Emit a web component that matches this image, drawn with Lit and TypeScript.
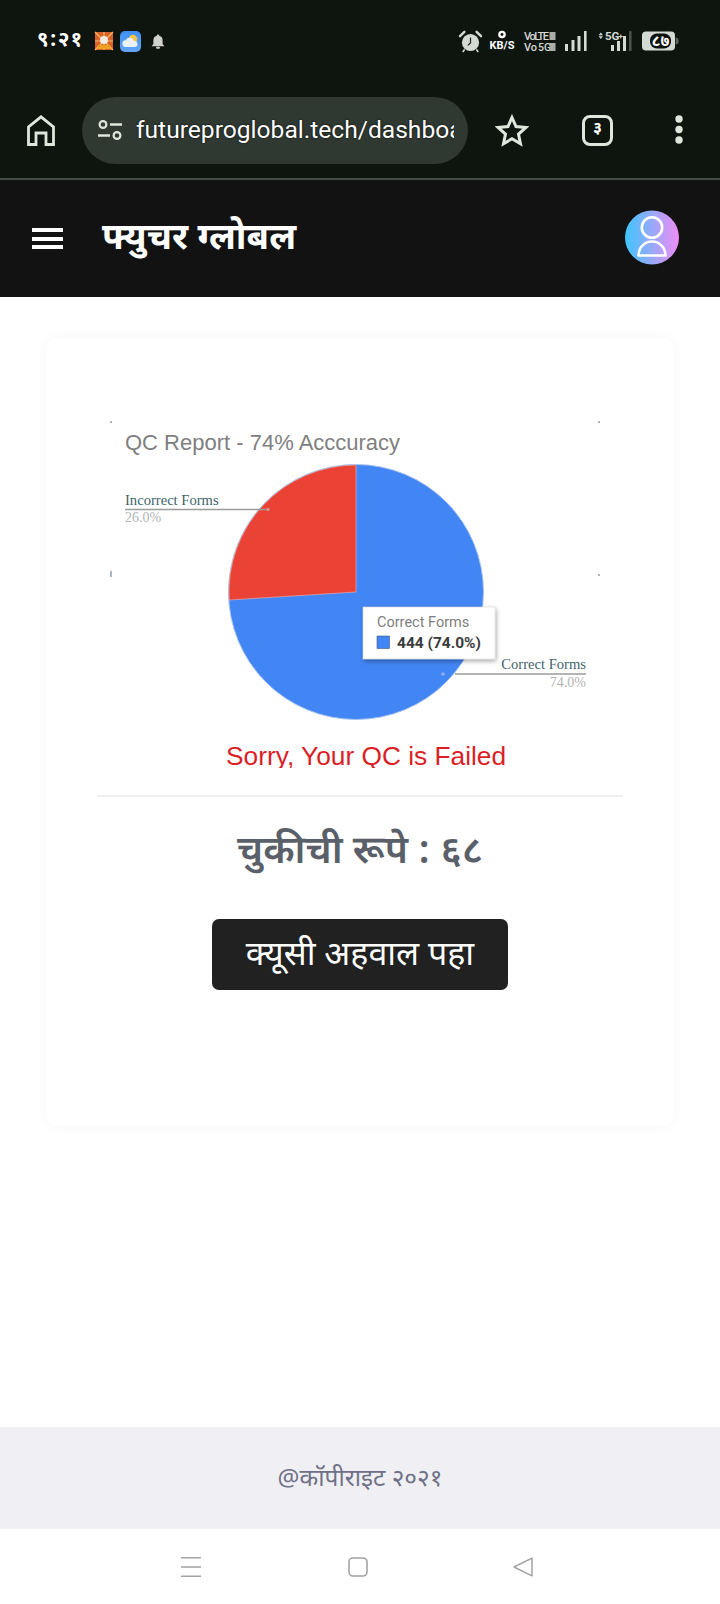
import { LitElement, css, html, svg } from 'lit';
import { customElement } from 'lit/decorators.js';

const DEVA = css`"Noto Sans Devanagari", "Noto Sans", "Lohit Devanagari", "Liberation Sans", sans-serif`;

@customElement('status-bar')
export class StatusBar extends LitElement {
  static styles = css`
    :host {
      display: flex;
      align-items: center;
      height: 82px;
      padding: 0 41px 0 37px;
      color: #fff;
    }
    .time {
      font: 700 21px/1 ${DEVA};
      letter-spacing: 1px;
      width: 51px;
      text-shadow: 0 0 2px #000;
    }
    .left {
      display: flex;
      align-items: center;
      gap: 7px;
    }
    .right {
      margin-left: auto;
      display: flex;
      align-items: center;
    }
    svg { display: block; overflow: visible; }
    svg text { font-family: "Roboto", sans-serif; }
    svg .batt {
      font: 700 16px ${DEVA};
      fill: #fff;
      stroke: #0e120e;
      stroke-width: 3px;
      paint-order: stroke;
    }
  `;

  render() {
    return html`
      <div class="left">
        <span class="time">९:२१</span>
        <svg width="18" height="18" viewBox="0 0 18 18">
          <rect width="18" height="18" fill="#d8622a" />
          <path d="M0 0L18 18M18 0L0 18M9 0V18M0 9H18" stroke="#f4b860" stroke-width="1.2" />
          <circle cx="9" cy="8" r="4" fill="#f1ece4" />
          <rect x="3" y="13" width="12" height="4" fill="#eda21f" />
        </svg>
        <svg width="21" height="21" viewBox="0 0 21 21">
          <defs>
            <linearGradient id="sky" x1="0" y1="0" x2="0" y2="1">
              <stop offset="0" stop-color="#3f8ff0" />
              <stop offset="1" stop-color="#62a6f5" />
            </linearGradient>
          </defs>
          <rect width="21" height="21" rx="5" fill="url(#sky)" />
          <circle cx="13" cy="8" r="4.2" fill="#f6c64a" />
          <path d="M6 16a3.4 3.4 0 0 1-.4-6.8A4.6 4.6 0 0 1 14 10a3 3 0 0 1 1 6z" fill="#e9f1fa" />
        </svg>
        <svg width="14" height="15" viewBox="0 0 14 15" style="margin-left:3px">
          <path d="M7 0.5a1.3 1.3 0 0 1 1.3 1.3A4.6 4.6 0 0 1 11.6 6.3V10L13.4 12.2H0.6L2.4 10V6.3A4.6 4.6 0 0 1 5.7 1.8 1.3 1.3 0 0 1 7 0.5z" fill="#cfd2cd" />
          <rect x="5" y="12.8" width="4" height="2" rx="1" fill="#cfd2cd" />
        </svg>
      </div>
      <div class="right">
        <svg width="23" height="23" viewBox="0 0 23 23">
          <circle cx="11.5" cy="12.5" r="8.6" fill="#d5d9d3" />
          <path d="M11.5 7.5V13L8.8 15.4" stroke="#1a1f1a" stroke-width="1.2" fill="none" />
          <path d="M1 6.2L5.4 1.8M22 6.2L17.6 1.8" stroke="#d5d9d3" stroke-width="2.4" stroke-linecap="round" />
          <path d="M5.6 19.4L3.8 22M17.4 19.4L19.2 22" stroke="#d5d9d3" stroke-width="1.6" />
        </svg>
        <svg width="26" height="22" viewBox="0 0 26 22" style="margin-left:7px">
          <circle cx="13" cy="4.5" r="3.8" fill="#fff" />
          <circle cx="13" cy="4.5" r="1.4" fill="#0e150f" />
          <text x="13" y="18.5" text-anchor="middle" font-size="11" font-weight="700" fill="#fff">KB/S</text>
        </svg>
        <svg width="33" height="24" viewBox="0 0 33 24" style="margin-left:9px">
          <text x="0" y="11" font-size="11" font-weight="500" fill="#d5d9d3" textLength="25">VoLTE</text>
          <rect x="25.5" y="3" width="6" height="8" fill="#a9aca7" />
          <text x="0" y="22" font-size="11" font-weight="500" fill="#d5d9d3">Vo</text>
          <text x="14" y="22" font-size="10.5" font-weight="500" fill="#d5d9d3">5G</text>
          <rect x="25.5" y="14" width="6" height="8" fill="#a9aca7" />
        </svg>
        <svg width="22" height="21" viewBox="0 0 22 21" style="margin-left:8px">
          <rect x="0" y="13" width="3" height="7" fill="#d5d9d3" />
          <rect x="6.5" y="9" width="3" height="11" fill="#d5d9d3" />
          <rect x="12.5" y="5" width="3" height="15" fill="#d5d9d3" />
          <rect x="19" y="0" width="2.6" height="20" fill="#d5d9d3" />
        </svg>
        <svg width="35" height="21" viewBox="0 0 35 21" style="margin-left:11px">
          <path d="M2.8 1.5L5 4.2H0.6zM2.8 8L5 5.3H0.6z" fill="#d5d9d3" />
          <text x="7" y="9" font-size="11.5" font-weight="700" fill="#d5d9d3">5G</text>
          <text x="20.5" y="8" font-size="8" font-weight="700" fill="#d5d9d3">+</text>
          <rect x="13" y="14" width="3" height="6" fill="#d5d9d3" />
          <rect x="19" y="10" width="3" height="10" fill="#d5d9d3" />
          <rect x="25" y="5" width="3" height="15" fill="#d5d9d3" />
          <rect x="31" y="0" width="2.6" height="20" fill="#4a4f4a" />
        </svg>
        <svg width="37" height="20" viewBox="0 0 37 20" style="margin-left:9px">
          <rect x="0" y="0.5" width="33" height="19" rx="4" fill="#d5d9d3" />
          <path d="M33.6 6.5a3 3 0 0 1 3 3v1a3 3 0 0 1-3 3z" fill="#5d615d" />
          <rect x="8" y="2.5" width="21" height="15" rx="7" fill="#0e120e" />
          <text class="batt" x="18.5" y="15" text-anchor="middle">८७</text>
        </svg>
      </div>
    `;
  }
}

@customElement('url-bar')
export class UrlBar extends LitElement {
  static styles = css`
    :host {
      display: flex;
      align-items: center;
      height: 98px;
      box-sizing: border-box;
      padding: 0 0 0 27px;
      border-bottom: 2px solid #454e45;
    }
    svg { display: block; flex: none; }
    .pill {
      width: 386px;
      height: 67px;
      margin-left: 27px;
      box-sizing: border-box;
      padding: 0 14px 0 15px;
      display: flex;
      align-items: center;
      gap: 13px;
      background: #2f3831;
      border-radius: 34px;
    }
    .url {
      flex: 1;
      min-width: 0;
      overflow: hidden;
      white-space: nowrap;
      font: 400 24.6px/32px "Roboto", sans-serif;
      color: #fff;
      text-shadow: 0 0 2px #000;
    }
    .star { margin-left: 27px; }
    .tabs {
      width: 31px;
      height: 31px;
      box-sizing: border-box;
      margin-left: 53px;
      border: 3px solid #dfe6dc;
      border-radius: 8px;
      display: flex;
      align-items: center;
      justify-content: center;
      color: #fff;
      font: 700 16px/1 ${DEVA};
    }
    .more { margin-left: 62px; }
  `;

  render() {
    return html`
      <svg class="home" width="28" height="31" viewBox="0 0 28 31">
        <path d="M1.5 29.5V12L14 1.8L26.5 12V29.5H19V18H9V29.5Z" fill="none" stroke="#dfe6dc" stroke-width="2.8" />
      </svg>
      <div class="pill">
        <svg width="26" height="22" viewBox="0 0 26 22">
          <circle cx="6" cy="5.5" r="3.4" fill="none" stroke="#dfe6dc" stroke-width="2.2" />
          <path d="M13 5.5H25M1 16.5H13" stroke="#dfe6dc" stroke-width="2.4" />
          <circle cx="20" cy="16.5" r="3.4" fill="none" stroke="#dfe6dc" stroke-width="2.2" />
        </svg>
        <span class="url">futureproglobal.tech/dashboard</span>
      </div>
      <svg class="star" width="34" height="33" viewBox="0 0 34 33">
        <path d="M17 3.5L21 12.5L30.8 13.5L23.5 20.1L25.5 29.7L17 24.8L8.5 29.7L10.5 20.1L3.2 13.5L13 12.5Z" fill="none" stroke="#dfe6dc" stroke-width="3" />
      </svg>
      <div class="tabs">३</div>
      <svg class="more" width="8" height="30" viewBox="0 0 8 30">
        <circle cx="4" cy="4" r="3.7" fill="#dfe6dc" />
        <circle cx="4" cy="14.5" r="3.7" fill="#dfe6dc" />
        <circle cx="4" cy="25" r="3.7" fill="#dfe6dc" />
      </svg>
    `;
  }
}

@customElement('app-header')
export class AppHeader extends LitElement {
  static styles = css`
    :host {
      display: flex;
      align-items: center;
      height: 117px;
      padding: 0 41px 0 32px;
      background: #121212;
      color: #fff;
    }
    .menu {
      width: 31px;
      height: 21px;
      display: flex;
      flex-direction: column;
      justify-content: space-between;
    }
    .menu span {
      height: 4px;
      background: #fff;
    }
    .title {
      margin: 3px 0 0 39px;
      font: 700 36.5px/1 ${DEVA};
    }
    .avatar {
      margin: 0 0 3px auto;
      display: block;
    }
  `;

  render() {
    return html`
      <div class="menu"><span></span><span></span><span></span></div>
      <div class="title">फ्युचर ग्लोबल</div>
      <svg class="avatar" width="54" height="55" viewBox="0 0 54 55">
        <defs>
          <linearGradient id="av" x1="0" y1="0" x2="1" y2="0">
            <stop offset="0" stop-color="#3fc6fd" />
            <stop offset="1" stop-color="#f08cf5" />
          </linearGradient>
        </defs>
        <circle cx="27" cy="27.5" r="27" fill="url(#av)" />
        <circle cx="27" cy="17.5" r="10.2" fill="none" stroke="#fff" stroke-width="2.6" />
        <path d="M13.5 45.5C13.5 37 20 31.5 27 31.5C34 31.5 40.5 37 40.5 45.5Z" fill="none" stroke="#fff" stroke-width="2.6" stroke-linejoin="round" />
      </svg>
    `;
  }
}

// pie slices, 74 / 26 split, measured from the image in the reference
const pieSlices = () => svg`
  <circle cx="246" cy="174" r="127.5" fill="#4285f4" stroke="#a9c4ee" stroke-width="1" />
  <path d="M246 174V47A127 127 0 0 0 119.2 182Z" fill="#ea4335" stroke="#f2b5ae" stroke-width="0.6" />
`;

@customElement('qc-chart')
export class QcChart extends LitElement {
  static styles = css`
    :host { display: block; }
    svg { display: block; margin: 0 auto; }
    .title { font: 400 22px "Liberation Sans", Arial, sans-serif; fill: #808080; }
    .name { font: 400 14.6px "Liberation Serif", serif; fill: #3f6468; }
    .pct { font: 400 14px "Liberation Serif", serif; fill: #b3b3b3; }
    .tip-name { font: 400 14.5px "Roboto", sans-serif; fill: #808080; }
    .tip-val { font: 700 15.5px "Roboto", sans-serif; fill: #3c3c3c; }
    .fail { font: 400 26.3px "Liberation Sans", Arial, sans-serif; fill: #dc1f26; }
  `;

  render() {
    return html`
      <svg width="500" height="350" viewBox="0 0 500 350">
        <defs>
          <filter id="tipShadow" x="-10%" y="-10%" width="125%" height="125%">
            <feDropShadow dx="1" dy="2" stdDeviation="2" flood-color="#000" flood-opacity="0.35" />
          </filter>
        </defs>
        <path d="M1 3V5M489 3V5M1 153V159M489 156V158" stroke="#5c6f80" stroke-width="1" />
        <text class="title" x="15" y="32">QC Report - 74% Acccuracy</text>
        ${pieSlices()}
        <text class="name" x="15" y="87">Incorrect Forms</text>
        <path d="M15 91.5H156" stroke="#9b9b9b" stroke-width="1.4" />
        <circle cx="158" cy="91.5" r="1.8" fill="#d8918a" />
        <text class="pct" x="15" y="104">26.0%</text>
        <circle cx="333" cy="256" r="1.8" fill="#8fb2ee" />
        <path d="M345 256H476" stroke="#9b9b9b" stroke-width="1.4" />
        <text class="name" x="476" y="251" text-anchor="end">Correct Forms</text>
        <text class="pct" x="476" y="269" text-anchor="end">74.0%</text>
        <rect x="253" y="189" width="132" height="52" fill="#fff" stroke="#d8d8d8" stroke-width="0.6" filter="url(#tipShadow)" />
        <text class="tip-name" x="267" y="209">Correct Forms</text>
        <rect x="267" y="218" width="12.5" height="12.5" fill="#4285f4" stroke="#44597c" stroke-width="0.6" />
        <text class="tip-val" x="287" y="230">444 (74.0%)</text>
        <text class="fail" x="116" y="347">Sorry, Your QC is Failed</text>
      </svg>
    `;
  }
}

@customElement('nav-bar')
export class NavBar extends LitElement {
  static styles = css`
    :host {
      display: flex;
      align-items: center;
      height: 75px;
      padding: 0 0 0 181px;
      background: #fff;
    }
    svg { display: block; }
  `;

  render() {
    return html`
      <svg width="20" height="20" viewBox="0 0 20 20">
        <path d="M0 .7H20M0 10H20M0 19.3H20" stroke="#a3a3a3" stroke-width="1.4" />
      </svg>
      <svg width="20" height="20" viewBox="0 0 20 20" style="margin-left:147px">
        <rect x="1" y="1" width="18" height="18" rx="4" fill="none" stroke="#a3a3a3" stroke-width="1.6" />
      </svg>
      <svg width="20" height="20" viewBox="0 0 20 20" style="margin-left:145px">
        <path d="M19 1.2V18.8L1 10Z" fill="none" stroke="#a3a3a3" stroke-width="1.5" stroke-linejoin="round" />
      </svg>
    `;
  }
}

@customElement('app-root')
export class AppRoot extends LitElement {
  static styles = css`
    :host {
      display: flex;
      flex-direction: column;
      width: 720px;
      height: 1604px;
      background: #fff;
      font-family: ${DEVA};
    }
    .top { background: #0e150f; }
    main {
      flex: 1;
      padding: 41px 46px 0;
    }
    .card {
      height: 788px;
      box-sizing: border-box;
      padding: 80px 51px 0;
      border-radius: 10px;
      box-shadow: 0 0 14px rgba(0, 0, 0, 0.04);
      background: #fff;
    }
    hr {
      margin: 27px 0 0;
      border: 0;
      height: 2px;
      background: #eeeff1;
    }
    .fine {
      margin: 31px 0 0;
      text-align: center;
      font-size: 39px;
      line-height: 52px;
      font-weight: 600;
      color: #5a6069;
    }
    .action {
      display: flex;
      justify-content: center;
      margin-top: 39px;
    }
    button {
      width: 296px;
      height: 71px;
      border: 0;
      padding: 5px 0 0;
      border-radius: 7px;
      background: #212121;
      color: #fff;
      font: 400 34px/1 ${DEVA};
    }
    footer {
      height: 102px;
      box-sizing: border-box;
      padding-top: 4px;
      display: flex;
      align-items: center;
      justify-content: center;
      background: #f0f0f4;
      color: #6f7087;
      font-size: 24.4px;
    }
  `;

  render() {
    return html`
      <div class="top">
        <status-bar></status-bar>
        <url-bar></url-bar>
      </div>
      <app-header></app-header>
      <main>
        <div class="card">
          <qc-chart></qc-chart>
          <hr />
          <div class="fine">चुकीची रूपे : ६८</div>
          <div class="action"><button>क्यूसी अहवाल पहा</button></div>
        </div>
      </main>
      <footer>@कॉपीराइट २०२१</footer>
      <nav-bar></nav-bar>
    `;
  }
}
